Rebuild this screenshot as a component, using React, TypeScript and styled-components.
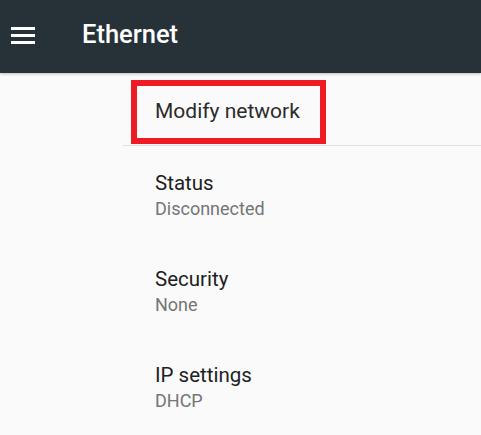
import React, { FunctionComponent } from "react";
import styled, { createGlobalStyle } from "styled-components";

const GlobalStyle = createGlobalStyle`
  html, body {
    margin: 0;
    padding: 0;
    background: #fafafa;
    font-family: Roboto, "Noto Sans", sans-serif;
  }
`;

const Page = styled.div`
  width: 481px;
  height: 435px;
  overflow: hidden;
  background: #fafafa;
`;

const Toolbar = styled.header`
  position: relative;
  z-index: 1;
  height: 73px;
  display: flex;
  align-items: center;
  background: #263238;
  box-shadow: 0 1px 3px rgba(0, 0, 0, 0.25);
`;

const MenuButton = styled.div`
  width: 24px;
  height: 17px;
  margin: 0 47px 2px 11px;
  display: flex;
  flex-direction: column;
  justify-content: space-between;

  span {
    display: block;
    height: 3px;
    background: #ffffff;
  }
`;

const Title = styled.h1`
  margin: 0 0 5px 0;
  color: #ffffff;
  font-size: 25.5px;
  font-weight: 500;
  line-height: 28px;
`;

const Content = styled.div`
  margin-left: 123px;
`;

const HeaderRow = styled.div`
  height: 73px;
  padding-top: 7px;
  box-sizing: border-box;
  border-bottom: 1px solid #e3e3e3;
`;

const Highlight = styled.div`
  margin-left: 8px;
  width: 195px;
  height: 64px;
  box-sizing: border-box;
  border: 6px solid #ed1c24;
  display: flex;
  align-items: center;
  padding-left: 18px;
`;

const HeaderText = styled.span`
  color: #2b2b2b;
  font-size: 21px;
  line-height: 24px;
  margin-bottom: 2px;
`;

const Item = styled.div`
  height: 96px;
  box-sizing: border-box;
  padding: 25px 0 0 32px;
`;

const ItemTitle = styled.div`
  color: #212121;
  font-size: 20.5px;
  line-height: 24px;
`;

const ItemSummary = styled.div`
  margin-top: 4px;
  color: #757575;
  font-size: 18px;
  line-height: 20px;
`;

const settings = [
  { title: "Status", summary: "Disconnected" },
  { title: "Security", summary: "None" },
  { title: "IP settings", summary: "DHCP" },
];

const App: FunctionComponent = () => {
  return (
    <Page>
      <GlobalStyle />
      <Toolbar>
        <MenuButton>
          <span />
          <span />
          <span />
        </MenuButton>
        <Title>Ethernet</Title>
      </Toolbar>
      <Content>
        <HeaderRow>
          <Highlight>
            <HeaderText>Modify network</HeaderText>
          </Highlight>
        </HeaderRow>
        {settings.map((s) => (
          <Item key={s.title}>
            <ItemTitle>{s.title}</ItemTitle>
            <ItemSummary>{s.summary}</ItemSummary>
          </Item>
        ))}
      </Content>
    </Page>
  );
};

export default App;
